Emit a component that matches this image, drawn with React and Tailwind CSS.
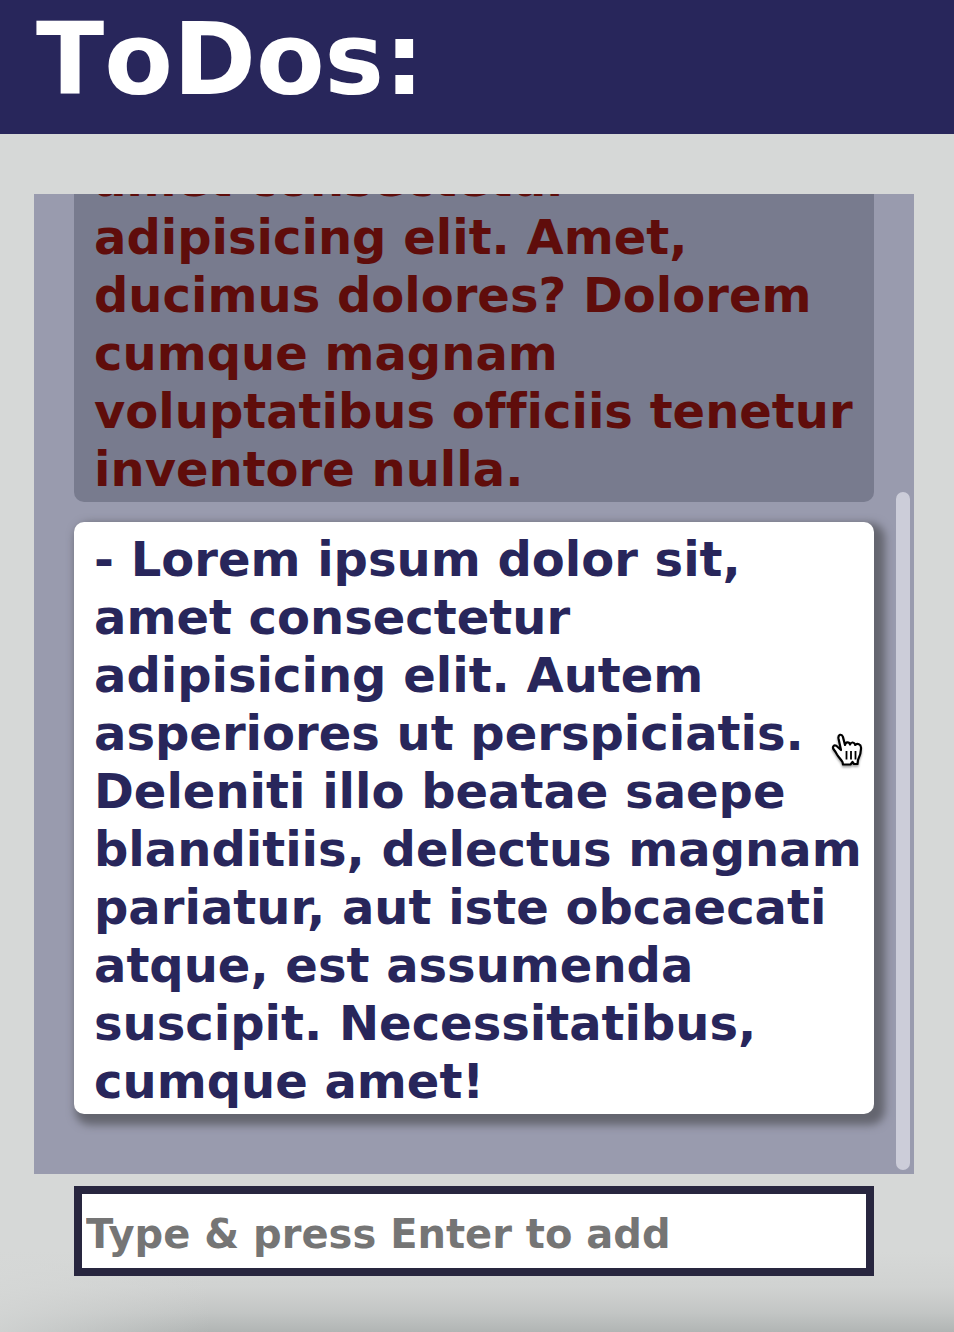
import { useState } from "react";

const initialTodos = [
  {
    id: 1,
    done: true,
    text: "Lorem ipsum dolor sit, amet consectetur adipisicing elit. Amet, ducimus dolores? Dolorem cumque magnam voluptatibus officiis tenetur inventore nulla.",
  },
  {
    id: 2,
    done: false,
    text: "Lorem ipsum dolor sit, amet consectetur adipisicing elit. Autem asperiores ut perspiciatis. Deleniti illo beatae saepe blanditiis, delectus magnam pariatur, aut iste obcaecati atque, est assumenda suscipit. Necessitatibus, cumque amet!",
  },
];

function HandPointer() {
  return (
    <svg
      viewBox="0 0 32 36"
      aria-hidden="true"
      className="pointer-events-none absolute top-[210px] right-[11px] h-9 w-8 drop-shadow-[0_2px_1px_rgba(0,0,0,0.35)]"
    >
      <path
        d="M12 32.500L11.500 30C9.500 27 7.500 25 6 22.500C5 20.500 3.700 18.700 2.600 17.300C1 14.800 3 12.500 5.300 13.800L10 18L7.500 6.500C6.800 2.300 10.700 1.500 11.900 4.900L14 13C14.500 9.500 18.300 9.500 19 12.500C20.200 9.500 23.500 10 24.200 13C26.500 11 29.800 12 30 15.500C30.200 20 29 24 27 28L26.500 32H23L21.500 30L19.500 32.500Z"
        fill="#fff"
        stroke="#000"
        strokeWidth="2.200"
        strokeLinejoin="round"
      />
      <path d="M15.500 19v8.500M20 19v8.500M24.500 19v8.500" stroke="#000" strokeWidth="1.800" />
    </svg>
  );
}

function TodoItem({ todo, onToggle }) {
  const look = todo.done
    ? "bg-[#787b8e] text-[#5f0d0b]"
    : "bg-white text-[#28265b] shadow-[6px_6px_8px_5px_#64656f]";
  return (
    <li className="relative">
      <button
        type="button"
        aria-pressed={todo.done}
        onClick={() => onToggle(todo.id)}
        className={`block w-full cursor-pointer rounded-[10px] pt-2 pr-2 pb-1 pl-5 text-left text-[48px] leading-[58px] font-bold ${look}`}
      >
        - {todo.text}
      </button>
      {!todo.done && <HandPointer />}
    </li>
  );
}

export default function App() {
  const [todos, setTodos] = useState(initialTodos);
  const [draft, setDraft] = useState("");

  const toggle = (id) =>
    setTodos(todos.map((t) => (t.id === id ? { ...t, done: !t.done } : t)));

  const add = (event) => {
    event.preventDefault();
    if (!draft.trim()) return;
    setTodos([...todos, { id: Date.now(), done: false, text: draft.trim() }]);
    setDraft("");
  };

  return (
    <div className="flex h-screen flex-col bg-[#d6d8d7] bg-[linear-gradient(to_right,rgba(214,216,215,0.8),rgba(214,216,215,0)_22%),linear-gradient(to_top,#b1b5b4,#c3c6c5_20px,#d0d2d1_44px,#d6d8d7_80px)] font-['DejaVu_Sans',Verdana,sans-serif] [font-variant-ligatures:none]">
      <header className="bg-[#28265b] px-9 pb-[14px]">
        <h1 className="text-[100px] leading-[120px] font-bold text-white [font-kerning:none]">ToDos:</h1>
      </header>
      <main className="flex min-h-0 flex-1 flex-col pt-[60px] pr-10 pb-14 pl-[34px]">
        <section
          aria-label="Todo list"
          className="relative flex min-h-0 flex-1 flex-col justify-end overflow-hidden bg-[#999bae] px-10 pb-[60px]"
        >
          <ul className="flex flex-col gap-5">
            {todos.map((todo) => (
              <TodoItem key={todo.id} todo={todo} onToggle={toggle} />
            ))}
          </ul>
          <div className="absolute right-1 bottom-1 h-[678px] w-[14px] rounded-full bg-[#cccdd9]" />
        </section>
        <form onSubmit={add} className="mt-3 px-10">
          <input
            type="text"
            aria-label="New todo"
            value={draft}
            onChange={(event) => setDraft(event.target.value)}
            placeholder="Type &amp; press Enter to add"
            className="block h-[90px] w-full border-8 border-[#28263f] bg-white px-1 pt-[6px] text-[40px] font-bold text-[#28265b] outline-none placeholder:text-[#757575]"
          />
        </form>
      </main>
    </div>
  );
}
